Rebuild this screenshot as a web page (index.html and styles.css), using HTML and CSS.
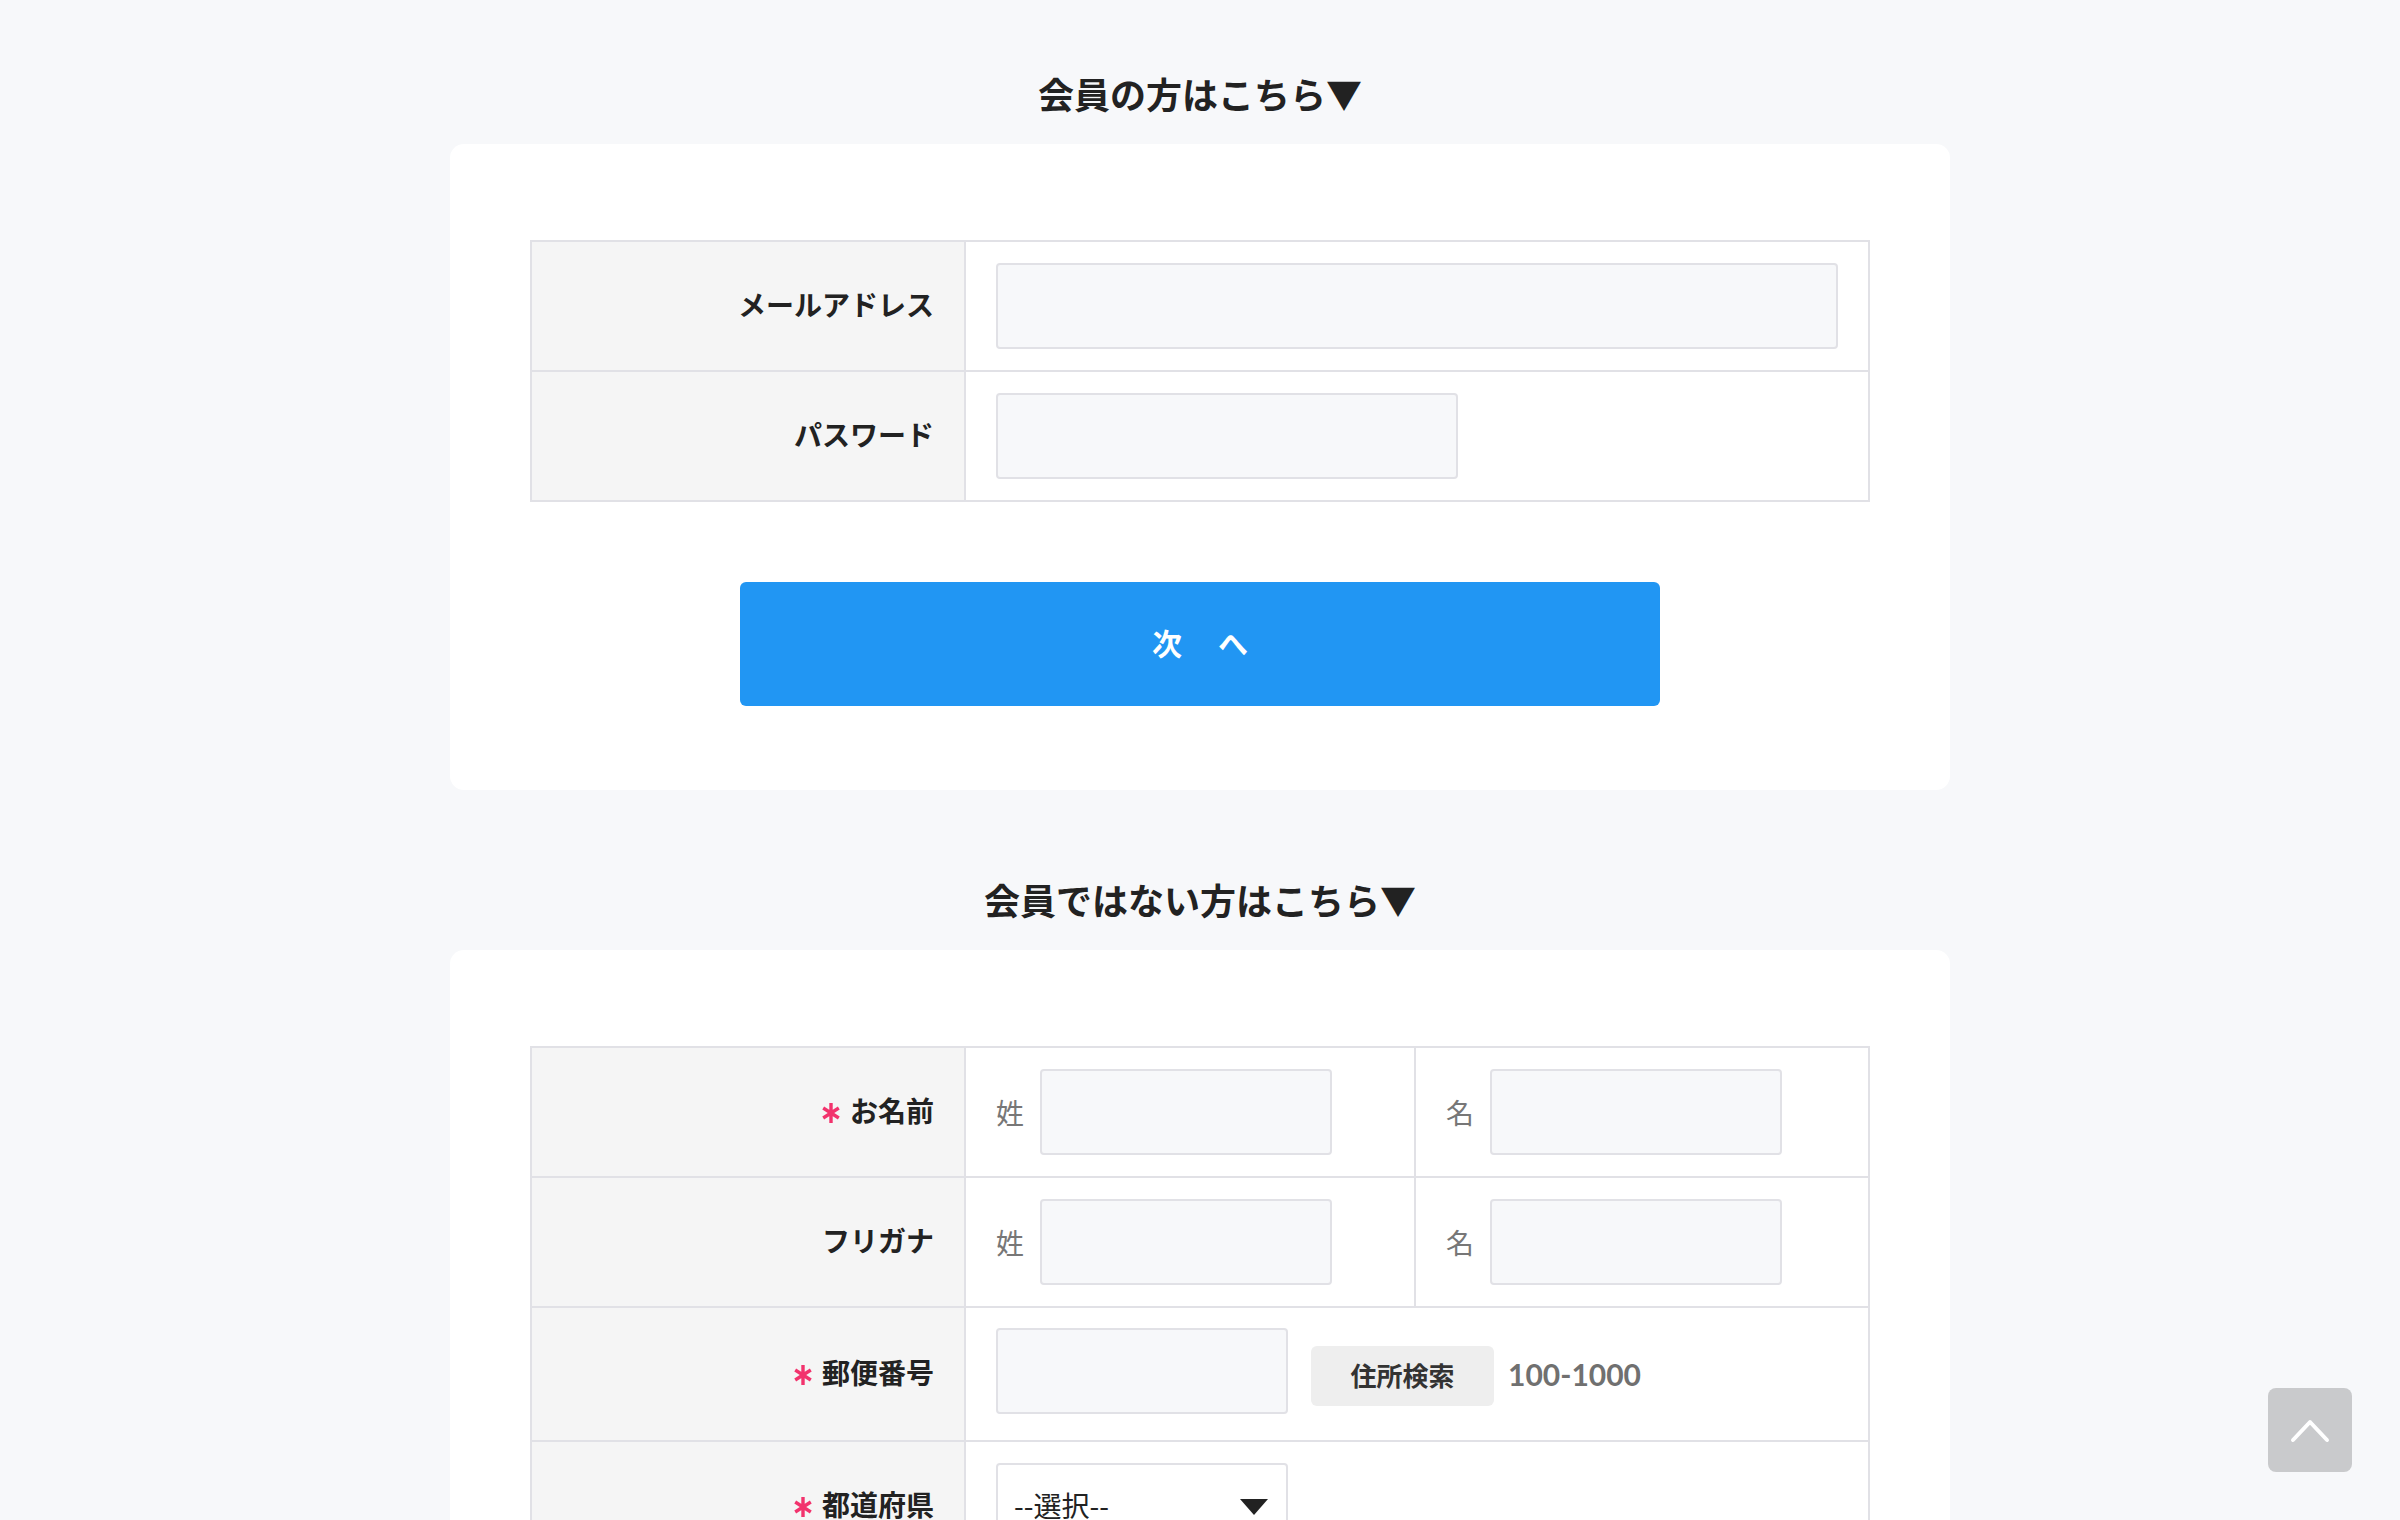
FILE: index.html
```html
<!DOCTYPE html>
<html lang="ja">
<head>
<meta charset="utf-8">
<title>ログイン</title>
<link rel="stylesheet" href="styles.css">
</head>
<body>
<div class="page">
  <section class="section">
    <h2 class="title">会員の方はこちら▼</h2>
    <div class="card">
      <table class="form-table">
        <tr>
          <th class="label-col">メールアドレス</th>
          <td><input class="input" type="text"></td>
        </tr>
        <tr>
          <th class="label-col">パスワード</th>
          <td><input class="input input-pw" type="password"></td>
        </tr>
      </table>
      <button class="submit" type="button">次へ</button>
    </div>
  </section>

  <section class="section">
    <h2 class="title">会員ではない方はこちら▼</h2>
    <div class="card">
      <table class="form-table">
        <tr>
          <th class="label-col"><svg class="req" viewBox="0 0 18 22" width="18" height="22"><path d="M9 1v20M1.2 6l15.6 10M16.8 6L1.2 16" stroke="#f2336d" stroke-width="3.4" fill="none"/></svg>お名前</th>
          <td class="name-cell"><div class="name-field"><span class="name-label">姓</span><input class="input input-name" type="text"></div></td>
          <td><div class="name-field"><span class="name-label">名</span><input class="input input-name" type="text"></div></td>
        </tr>
        <tr>
          <th class="label-col">フリガナ</th>
          <td class="name-cell"><div class="name-field"><span class="name-label">姓</span><input class="input input-name" type="text"></div></td>
          <td><div class="name-field"><span class="name-label">名</span><input class="input input-name" type="text"></div></td>
        </tr>
        <tr>
          <th class="label-col"><svg class="req" viewBox="0 0 18 22" width="18" height="22"><path d="M9 1v20M1.2 6l15.6 10M16.8 6L1.2 16" stroke="#f2336d" stroke-width="3.4" fill="none"/></svg>郵便番号</th>
          <td colspan="2" class="postal-cell">
            <div class="postal">
              <input class="input input-name" type="text">
              <button class="search" type="button">住所検索</button>
              <span class="example">100-1000</span>
            </div>
          </td>
        </tr>
        <tr>
          <th class="label-col"><svg class="req" viewBox="0 0 18 22" width="18" height="22"><path d="M9 1v20M1.2 6l15.6 10M16.8 6L1.2 16" stroke="#f2336d" stroke-width="3.4" fill="none"/></svg>都道府県</th>
          <td colspan="2">
            <div class="select-wrap">
              <select class="select"><option>--選択--</option></select>
              <span class="caret"></span>
            </div>
          </td>
        </tr>
        <tr>
          <th class="label-col"><svg class="req" viewBox="0 0 18 22" width="18" height="22"><path d="M9 1v20M1.2 6l15.6 10M16.8 6L1.2 16" stroke="#f2336d" stroke-width="3.4" fill="none"/></svg>市区町村</th>
          <td colspan="2"><input class="input" type="text"></td>
        </tr>
      </table>
    </div>
  </section>
</div>

<a class="to-top" href="#" aria-label="ページトップへ">
  <svg viewBox="0 0 84 84" width="84" height="84"><path d="M25 52L42 34L59 52" stroke="#fff" stroke-width="4" fill="none" stroke-linecap="round" stroke-linejoin="round"/></svg>
</a>
</body>
</html>
```

FILE: styles.css
```css
html, body {
  margin: 0;
  padding: 0;
}

body {
  background: #f7f8fa;
  font-family: "Noto Sans CJK JP", "Noto Sans", sans-serif;
  color: #222;
}

.page {
  width: 1500px;
  margin: 0 auto;
  padding: 69px 0 200px;
}

.section + .section {
  margin-top: 85px;
}

.title {
  margin: 0 0 26px;
  font-size: 36px;
  line-height: 49px;
  font-weight: 700;
  text-align: center;
  color: #222;
}

.card {
  background: #fff;
  border-radius: 14px;
  padding: 96px 80px 84px;
}

.form-table {
  width: 100%;
  table-layout: fixed;
  border-collapse: separate;
  border-spacing: 0;
  border-top: 2px solid #e1e1e6;
  border-left: 2px solid #e1e1e6;
  box-sizing: border-box;
}

.form-table th,
.form-table td {
  box-sizing: border-box;
  border-right: 2px solid #e1e1e6;
  border-bottom: 2px solid #e1e1e6;
}

.label-col {
  width: 434px;
  background: #f5f5f5;
  text-align: right;
  padding: 0 30px 5px;
  font-size: 28px;
  font-weight: 700;
  vertical-align: middle;
  white-space: nowrap;
}

.form-table td {
  padding: 21px 30px;
  vertical-align: middle;
}

.name-cell {
  width: 450px;
}

.req {
  display: inline-block;
  vertical-align: -2px;
  margin-right: 10px;
}

.input {
  display: block;
  box-sizing: border-box;
  width: 100%;
  height: 86px;
  margin: 0;
  border: 2px solid #e1e1e6;
  border-radius: 4px;
  background: #f7f8fa;
  font-size: 28px;
  font-family: inherit;
  padding: 0 16px;
  outline: none;
}

.input-pw {
  width: 462px;
}

.input-name {
  width: 292px;
  flex: none;
}

.name-field {
  display: flex;
  align-items: center;
}

.name-label {
  width: 44px;
  flex: none;
  font-size: 28px;
  color: #777;
  font-weight: 400;
}

.submit {
  display: block;
  width: 920px;
  height: 124px;
  margin: 80px auto 0;
  padding: 0 0 5px;
  background: #2196f3;
  border: 0;
  border-radius: 6px;
  color: #fff;
  font-family: inherit;
  font-size: 30px;
  font-weight: 700;
  letter-spacing: 36px;
  text-indent: 36px;
  cursor: pointer;
}

.form-table td.postal-cell {
  padding: 20px 30px 26px;
}

.postal {
  display: flex;
  align-items: flex-start;
}

.search {
  flex: none;
  width: 183px;
  height: 60px;
  margin: 18px 0 0 23px;
  border: 0;
  border-radius: 6px;
  background: #eeeeee;
  color: #333;
  font-family: inherit;
  font-size: 26px;
  font-weight: 700;
  padding: 0 0 3px;
}

.example {
  margin: 16px 0 0 14px;
  line-height: 60px;
  font-family: Lato, "Noto Sans", sans-serif;
  font-size: 30px;
  font-weight: 700;
  color: #707070;
}

.select-wrap {
  position: relative;
  width: 292px;
}

.select {
  display: block;
  box-sizing: border-box;
  width: 100%;
  height: 86px;
  appearance: none;
  -webkit-appearance: none;
  border: 2px solid #e1e1e6;
  border-radius: 4px;
  background: #fff;
  color: #222;
  font-family: inherit;
  font-size: 28px;
  padding: 0 16px 3px;
}

.caret {
  position: absolute;
  right: 20px;
  top: 50%;
  margin-top: -7px;
  width: 0;
  height: 0;
  border-left: 14px solid transparent;
  border-right: 14px solid transparent;
  border-top: 16px solid #222;
  pointer-events: none;
}

.to-top {
  position: fixed;
  right: 48px;
  bottom: 48px;
  width: 84px;
  height: 84px;
  border-radius: 8px;
  background: #c9cacc;
  display: block;
}

.to-top svg {
  display: block;
}
```
